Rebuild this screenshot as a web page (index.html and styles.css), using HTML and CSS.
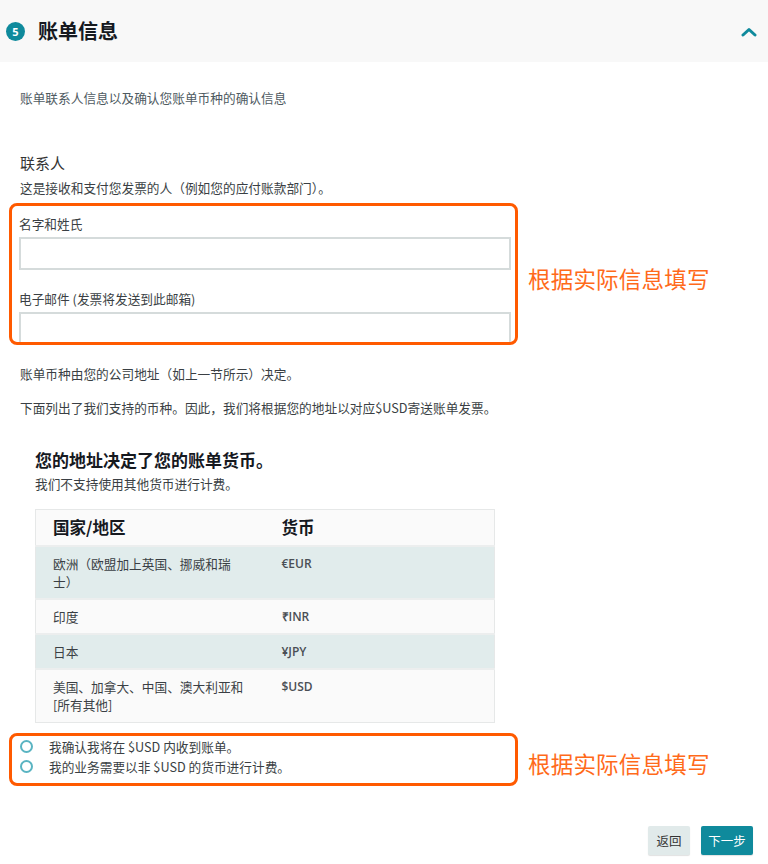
FILE: index.html
```html
<!DOCTYPE html>
<html lang="zh-CN">
<head>
<meta charset="utf-8">
<title>账单信息</title>
<link rel="stylesheet" href="styles.css">
</head>
<body>
<div class="header">
  <div class="title-wrap">
    <span class="badge">5</span>
    <h1 class="title">账单信息</h1>
  </div>
  <svg class="chevron" width="16" height="10" viewBox="0 0 16 10"><path d="M2 8 L8 2.5 L14 8" fill="none" stroke="#0f8a9c" stroke-width="3" stroke-linecap="round" stroke-linejoin="round"/></svg>
</div>

<div class="content">
  <p class="intro">账单联系人信息以及确认您账单币种的确认信息</p>

  <h2 class="section-title">联系人</h2>
  <p class="desc">这是接收和支付您发票的人（例如您的应付账款部门）。</p>

  <div class="annot-row form-row">
    <div class="mark-box form-box">
      <label class="field-label">名字和姓氏</label>
      <div class="input"></div>
      <label class="field-label second">电子邮件 (发票将发送到此邮箱)</label>
      <div class="input"></div>
    </div>
    <span class="annot">根据实际信息填写</span>
  </div>

  <p class="para first">账单币种由您的公司地址（如上一节所示）决定。</p>
  <p class="para second">下面列出了我们支持的币种。因此，我们将根据您的地址以对应$USD寄送账单发票。</p>

  <div class="currency">
    <h3 class="cur-title">您的地址决定了您的账单货币。</h3>
    <p class="cur-sub">我们不支持使用其他货币进行计费。</p>
    <table class="cur-table">
      <thead>
        <tr><th class="c1">国家/地区</th><th>货币</th></tr>
      </thead>
      <tbody>
        <tr class="alt"><td class="c1">欧洲（欧盟加上英国、挪威和瑞士）</td><td>€EUR</td></tr>
        <tr><td class="c1">印度</td><td>₹INR</td></tr>
        <tr class="alt"><td class="c1">日本</td><td>¥JPY</td></tr>
        <tr><td class="c1">美国、加拿大、中国、澳大利亚和[所有其他]</td><td>$USD</td></tr>
      </tbody>
    </table>
  </div>

  <div class="annot-row radio-row">
    <div class="mark-box radio-box">
      <div class="radio-item"><span class="radio"></span><span>我确认我将在 $USD 内收到账单。</span></div>
      <div class="radio-item"><span class="radio"></span><span>我的业务需要以非 $USD 的货币进行计费。</span></div>
    </div>
    <span class="annot">根据实际信息填写</span>
  </div>

  <div class="actions">
    <button class="btn btn-back">返回</button>
    <button class="btn btn-next">下一步</button>
  </div>
</div>
</body>
</html>
```

FILE: styles.css
```css
* { box-sizing: border-box; }
html, body { margin: 0; padding: 0; background: #ffffff; }
body {
  font-family: "Noto Sans CJK SC", "Open Sans", sans-serif;
  color: #3a3f44;
  width: 768px;
  height: 864px;
  overflow: hidden;
}
p, h1, h2, h3 { margin: 0; }

.header {
  height: 62px;
  background: #f8f8f8;
  display: flex;
  align-items: center;
  justify-content: space-between;
  padding: 0 11px 0 6px;
}
.title-wrap { display: flex; align-items: center; }
.badge {
  width: 19px;
  height: 19px;
  border-radius: 50%;
  background: #0f8a9c;
  color: #ffffff;
  font-family: "Open Sans", sans-serif;
  font-size: 11px;
  font-weight: 700;
  display: flex;
  align-items: center;
  justify-content: center;
  line-height: 1;
}
.title {
  margin-left: 13px;
  font-size: 20px;
  font-weight: 700;
  color: #16191f;
  line-height: 26px;
}
.chevron { display: block; margin-top: 2px; }

.intro {
  margin: 27px 0 0 20px;
  font-size: 12.7px;
  line-height: 18px;
  color: #4f5b62;
}
.section-title {
  margin: 46px 0 0 20px;
  font-size: 15px;
  font-weight: 400;
  line-height: 20px;
  color: #333;
}
.desc {
  margin: 6px 0 0 20px;
  font-size: 12.7px;
  line-height: 18px;
  color: #3a3f44;
}

.annot-row {
  display: flex;
  align-items: center;
  margin-left: 9px;
  gap: 10px;
}
.form-row { margin-top: 6px; }
.mark-box {
  border: 3px solid #ff5a00;
  border-radius: 8px;
  width: 509px;
}
.annot {
  color: #ff6a1a;
  font-size: 22.5px;
  line-height: 30px;
  margin-top: 8px;
  letter-spacing: 0.2px;
}
.form-box {
  height: 142px;
  overflow: hidden;
  padding: 9px 4px 0 7px;
}
.field-label {
  display: block;
  font-size: 12.7px;
  line-height: 18px;
  color: #3a3f44;
}
.field-label.second { margin-top: 20px; }
.input {
  margin-top: 4px;
  height: 33px;
  border: 2px solid #d5dbdb;
  background: #ffffff;
}

.para {
  margin-left: 20px;
  font-size: 12.7px;
  line-height: 18px;
  color: #3a3f44;
}
.para.first { margin-top: 20px; }
.para.second { margin-top: 16px; }

.currency { margin: 31px 0 0 35px; }
.cur-title {
  font-size: 17px;
  font-weight: 700;
  line-height: 24px;
  color: #16191f;
}
.cur-sub {
  margin-top: 3px;
  font-size: 12.7px;
  line-height: 18px;
  color: #3a3f44;
}
.cur-table {
  margin-top: 16px;
  width: 460px;
  table-layout: fixed;
  border-collapse: collapse;
  border: 1px solid #e6e8e8;
  font-size: 12.7px;
  color: #3a3f44;
}
.cur-table th {
  text-align: left;
  font-size: 16.5px;
  font-weight: 700;
  color: #16191f;
  height: 36px;
  padding: 0 0 0 16px;
  background: #fafafa;
  border-bottom: 2px solid #eceeee;
}
.cur-table th.c1, .cur-table td.c1 { width: 230px; padding-left: 17px; padding-right: 20px; }
.cur-table td {
  vertical-align: top;
  padding: 8px 0 7px 16px;
  line-height: 18px;
  background: #fafafa;
  border-bottom: 2px solid #eceeee;
}
.cur-table tr:last-child td { border-bottom: none; padding-bottom: 8px; }
.cur-table tr.alt td { background: #e1ecec; }
.cur-table tr td:last-child { font-family: "Open Sans", sans-serif; font-weight: 600; font-size: 12px; color: #4a4f55; }

.radio-row { margin-top: 10px; }
.radio-box {
  padding: 1px 0 6px 8px;
}
.radio-item {
  display: flex;
  align-items: center;
  height: 20px;
  font-size: 12.7px;
  color: #3a3f44;
}
.radio {
  width: 13px;
  height: 13px;
  border: 2px solid #5ab4c2;
  border-radius: 50%;
  margin-right: 16px;
  flex: none;
}

.actions {
  display: flex;
  justify-content: flex-end;
  gap: 11px;
  margin-top: 40px;
  padding-right: 15px;
}
.btn {
  height: 29px;
  border: none;
  border-radius: 2px;
  font-family: "Noto Sans CJK SC", sans-serif;
  font-size: 12.5px;
  padding: 0;
  cursor: pointer;
  box-shadow: 0 1px 1px rgba(0,0,0,0.12);
}
.btn-back { width: 42px; background: #e1eaea; color: #333; }
.btn-next { width: 52px; background: #0f8a9c; color: #ffffff; }
```
